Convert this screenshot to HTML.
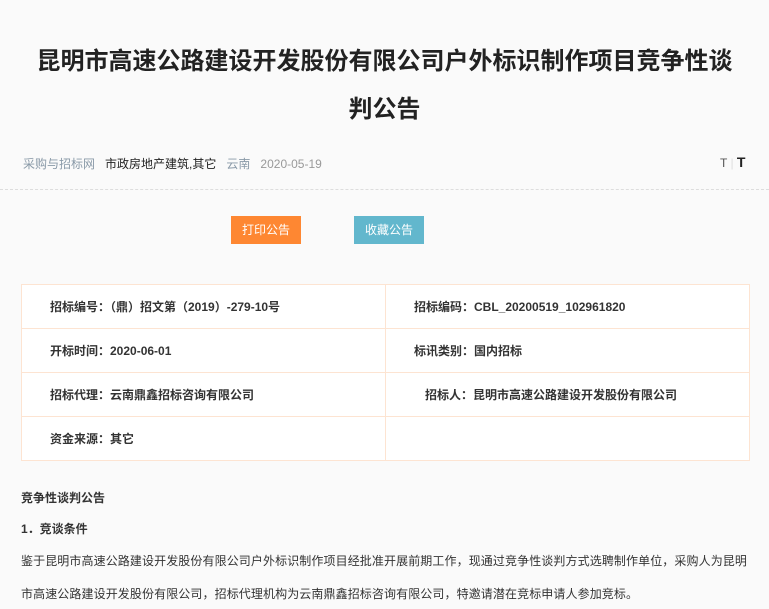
<!DOCTYPE html>
<html><head><meta charset="utf-8"><style>
body{margin:0;background:#fafafa;font-family:"Liberation Sans","Noto Sans CJK SC",sans-serif;width:769px;height:609px;overflow:hidden;position:relative;color:#333}
.t{position:absolute;left:0;width:769px;text-align:center;font-size:24px;font-weight:bold;color:#222;line-height:48px;top:38px}
.meta{position:absolute;top:155px;left:23px;font-size:12px;white-space:nowrap}
.g{color:#8a9aa8}.d{color:#222}
.tt{position:absolute;top:154px;left:720px;font-size:12px;color:#555}
.dash{position:absolute;top:189px;left:0;width:769px;border-top:1px dashed #ddd}
.btn{position:absolute;top:216px;width:70px;height:28px;line-height:28px;text-align:center;color:#fff;font-size:12px}
table{position:absolute;left:21px;top:284px;width:729px;border-collapse:collapse;background:#fff}
td{border:1px solid #fde4d2;height:43px;font-size:12px;font-weight:bold;color:#333;padding:0 0 0 28px;width:50%}
.b{position:absolute;left:21px;font-size:12px;color:#333;white-space:nowrap}
</style></head><body>
<div class="t">昆明市高速公路建设开发股份有限公司户外标识制作项目竞争性谈<br>判公告</div>
<div class="meta"><span class="g">采购与招标网</span>&nbsp;&nbsp;&nbsp;<span class="d">市政房地产建筑,其它</span>&nbsp;&nbsp;&nbsp;<span class="g">云南</span>&nbsp;&nbsp;&nbsp;<span style="color:#999">2020-05-19</span></div>
<div class="tt">T <span style="color:#ddd">|</span> <b style="font-size:14px;color:#222">T</b></div>
<div class="dash"></div>
<div class="btn" style="left:231px;background:#fe8732">打印公告</div>
<div class="btn" style="left:354px;background:#62b7cd">收藏公告</div>
<table>
<tr><td>招标编号：（鼎）招文第（2019）-279-10号</td><td>招标编码：CBL_20200519_102961820</td></tr>
<tr><td>开标时间：2020-06-01</td><td>标讯类别：国内招标</td></tr>
<tr><td>招标代理：云南鼎鑫招标咨询有限公司</td><td style="padding-left:39px">招标人：昆明市高速公路建设开发股份有限公司</td></tr>
<tr><td>资金来源：其它</td><td></td></tr>
</table>
<div class="b" style="top:489px;font-weight:bold">竞争性谈判公告</div>
<div class="b" style="top:520px;font-weight:bold">1．竞谈条件</div>
<div class="b" style="top:552px;letter-spacing:0.1px">鉴于昆明市高速公路建设开发股份有限公司户外标识制作项目经批准开展前期工作，现通过竞争性谈判方式选聘制作单位，采购人为昆明</div>
<div class="b" style="top:585px;letter-spacing:0.1px">市高速公路建设开发股份有限公司，招标代理机构为云南鼎鑫招标咨询有限公司，特邀请潜在竞标申请人参加竞标。</div>
</body></html>
